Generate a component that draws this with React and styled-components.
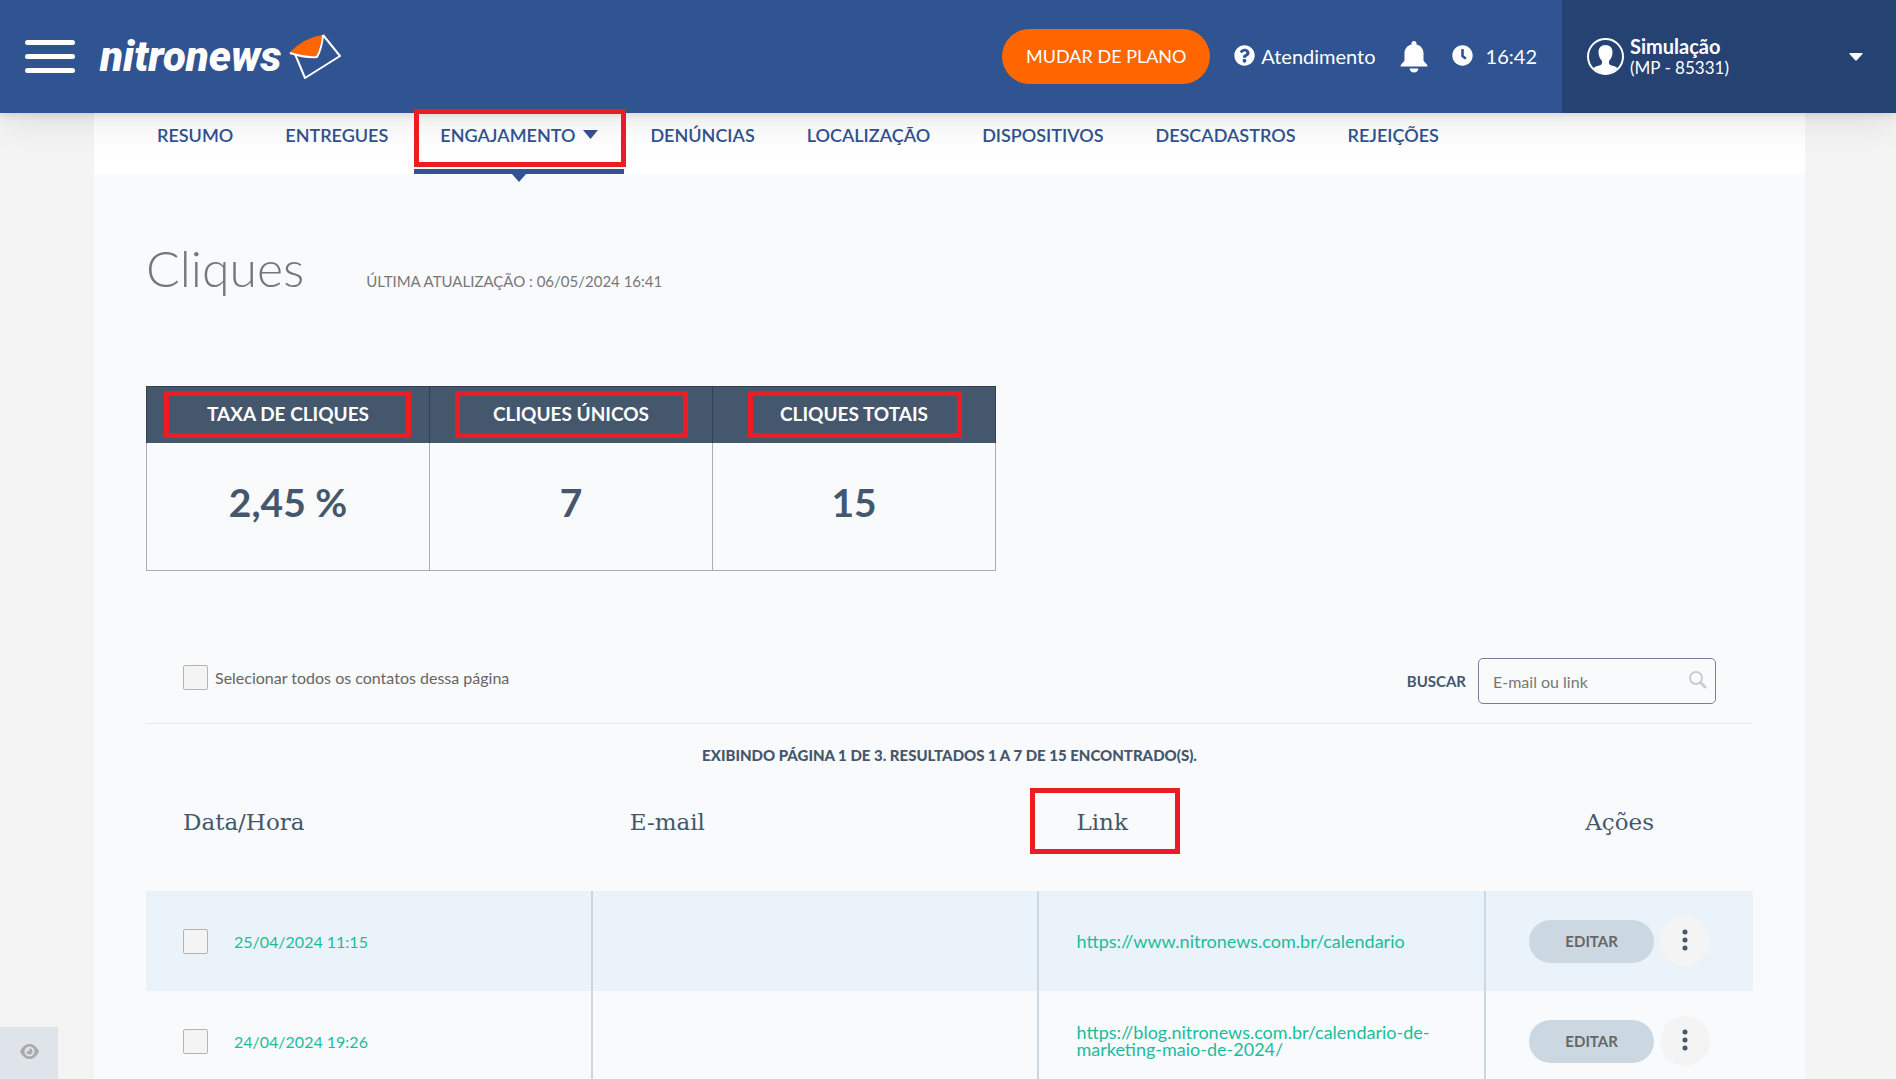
import React, { useState } from 'react'
import styled, { createGlobalStyle } from 'styled-components'
import { FaQuestionCircle, FaClock } from 'react-icons/fa'

const GlobalStyle = createGlobalStyle`
* {
box-sizing: border-box;
}
body {
margin: 0;
background-color: #f4f4f4;
font-family: Lato, sans-serif;
font-size: 16px;
color: #666;
}
button, input {
font-family: inherit;
}
`
const Page = styled.div`
height: 100vh;
overflow: hidden;
display: flex;
flex-direction: column;
`
const Header = styled.header`
position: relative;
z-index: 1;
flex: none;
display: flex;
align-items: stretch;
height: 113px;
background-color: #305391;
box-shadow: 0 0 10px rgba(0, 0, 0, 0.15), 0 6px 40px rgba(0, 0, 0, 0.1);
color: #fff;
`
const Brand = styled.div`
flex: 1;
display: flex;
align-items: center;
padding-left: 25px;
`
const MenuButton = styled.button`
display: flex;
flex-direction: column;
gap: 9px;
width: 50px;
padding: 0;
border: none;
background: none;
cursor: pointer;
`
const MenuBar = styled.span`
height: 5px;
border-radius: 3px;
background-color: #fff;
`
const Logo = styled.a`
display: flex;
align-items: center;
gap: 8px;
margin-left: 25px;
font-family: Roboto, sans-serif;
font-size: 42px;
line-height: 48px;
font-weight: 900;
font-style: italic;
color: #fff;
text-decoration: none;
`
const Tools = styled.div`
display: flex;
align-items: center;
gap: 24px;
padding-right: 25px;
font-size: 20px;
`
const PlanButton = styled.button`
width: 208px;
height: 55px;
padding: 0 0 2px;
border: none;
border-radius: 28px;
background-color: #ff6600;
color: #fff;
font-size: 18px;
cursor: pointer;
`
const Tool = styled.a`
display: flex;
align-items: center;
gap: ${props => props.$gap || 0}px;
padding-bottom: 2px;
color: #fff;
text-decoration: none;
`
const BellButton = styled.button`
display: flex;
padding: 0;
border: none;
background: none;
cursor: pointer;
`
const Account = styled.button`
display: flex;
align-items: center;
width: 334px;
padding: 0 33px 0 25px;
border: none;
background-color: #264273;
color: #fff;
text-align: left;
cursor: pointer;
`
const AccountText = styled.span`
flex: 1;
display: flex;
flex-direction: column;
margin-left: 6px;
font-size: 17px;
line-height: 22px;
`
const AccountName = styled.strong`
font-size: 20px;
`
const Main = styled.main`
flex: 1;
margin: 0 91px 0 94px;
background-color: #f9fafc;
`
const Tabs = styled.nav`
display: flex;
height: 61px;
padding-left: 37px;
background-color: #fff;
`
const Tab = styled.a`
position: relative;
display: flex;
gap: 8px;
padding: 10px 26px 0;
border-bottom: 5px solid ${props => props.$active ? '#305391' : 'transparent'};
font-size: 18px;
line-height: 24px;
font-weight: 600;
color: #305391;
text-decoration: none;
`
const TabCaret = styled.svg`
margin-top: 7px;
`
const TabArrow = styled.svg`
position: absolute;
top: 100%;
left: 50%;
margin: 5px 0 0 -7px;
`
// red frame drawn over the part it calls out
const Frame = styled.span`
position: absolute;
z-index: 2;
inset: ${props => props.$inset};
border: 5px solid #ed1c24;
pointer-events: none;
`
const Content = styled.div`
padding: 64px 52px 0;
`
const TitleRow = styled.div`
display: flex;
align-items: baseline;
gap: 62px;
`
const Title = styled.h1`
margin: 0;
font-size: 50px;
line-height: 60px;
font-weight: 300;
color: #777;
`
const Updated = styled.span`
font-size: 15px;
color: #777;
`
const Stats = styled.table`
width: 100%;
max-width: 850px;
margin-top: 88px;
border-collapse: collapse;
table-layout: fixed;
text-align: center;
color: #44576d;
`
const StatHead = styled.th`
position: relative;
height: 56px;
padding: 0 0 2px;
border: 1px solid #2f4055;
border-bottom: none;
background-color: #44576d;
font-size: 19px;
line-height: 24px;
color: #fff;
`
const StatValue = styled.td`
height: 128px;
padding: 0 0 8px;
border: 1px solid #acacac;
border-top: none;
font-size: 39px;
font-weight: bold;
`
const Toolbar = styled.div`
display: flex;
justify-content: space-between;
margin-top: 87px;
padding: 0 37px 19px;
border-bottom: 1px solid #e6e9ec;
`
const SelectAll = styled.label`
display: flex;
align-items: center;
gap: 7px;
height: 25px;
margin-top: 7px;
line-height: 28px;
`
const Checkbox = styled.input`
appearance: none;
flex: none;
width: 25px;
height: 25px;
margin: 0;
border: 1px solid #b4b4b4;
border-radius: 2px;
background-color: #f4f4f4;
`
const Search = styled.div`
position: relative;
display: flex;
align-items: center;
gap: 12px;
`
const SearchLabel = styled.label`
font-size: 15px;
font-weight: bold;
color: #44576d;
`
const SearchInput = styled.input`
width: 238px;
height: 46px;
padding: 0 40px 0 14px;
border: 1px solid #6d8299;
border-radius: 5px;
background: none;
font-size: 16px;
color: #44576d;
&::placeholder {
color: #777;
}
`
const SearchIcon = styled.svg`
position: absolute;
right: 9px;
top: 12px;
`
const Summary = styled.p`
margin: 21px 0 0;
font-size: 15px;
line-height: 20px;
font-weight: 900;
text-align: center;
color: #44576d;
`
const Clicks = styled.table`
width: 100%;
border-collapse: separate;
border-spacing: 0;
table-layout: fixed;
`
const ColumnHead = styled.th`
width: ${props => props.$width};
height: 126px;
padding: 0 0 12px ${props => props.$center ? 0 : 37}px;
font-family: "DejaVu Serif", serif;
font-size: 23px;
line-height: 30px;
font-weight: normal;
text-align: ${props => props.$center ? 'center' : 'left'};
color: #44576d;
`
const HeadText = styled.span`
position: relative;
display: inline-block;
`
const Row = styled.tr`
background-color: ${props => props.$shaded ? '#eaf3fa' : 'transparent'};
`
const Cell = styled.td`
height: 100px;
padding: 0 37px;
border-right: 2px solid #cbd8e2;
line-height: 17px;
&:last-child {
border-right: none;
}
`
const DateLabel = styled.label`
display: flex;
align-items: center;
gap: 26px;
color: #1abc9c;
`
const ClickLink = styled.a`
font-size: 18px;
color: #1abc9c;
text-decoration: none;
`
const Actions = styled.div`
display: flex;
align-items: center;
justify-content: center;
gap: 6px;
`
const EditButton = styled.button`
width: 125px;
height: 43px;
border: none;
border-radius: 22px;
background-color: #cbd8e2;
color: #666;
font-size: 15px;
font-weight: bold;
cursor: pointer;
`
const MoreButton = styled.button`
width: 50px;
height: 50px;
padding: 0;
border: none;
border-radius: 50%;
background-color: #f4f4f4;
cursor: pointer;
`
const WatchButton = styled.button`
position: fixed;
left: 0;
bottom: 0;
width: 58px;
height: 52px;
padding: 0;
border: none;
background-color: #dfe3ea;
cursor: pointer;
`

const tabs = ['Resumo', 'Entregues', 'Engajamento', 'Denúncias', 'Localização', 'Dispositivos', 'Descadastros', 'Rejeições']

const stats = [
  { name: 'TAXA DE CLIQUES', value: '2,45 %', frame: '4px 18px 5px 17px' },
  { name: 'CLIQUES ÚNICOS', value: '7', frame: '4px 24px 5px 25px' },
  { name: 'CLIQUES TOTAIS', value: '15', frame: '4px 33px 5px 35px' },
]

const clicks = [
  { date: '25/04/2024 11:15', email: '', link: 'https://www.nitronews.com.br/calendario' },
  { date: '24/04/2024 19:26', email: '', link: 'https://blog.nitronews.com.br/calendario-de-marketing-maio-de-2024/' },
]

const Envelope = () => (
  <svg width="52" height="46" viewBox="0 0 52 46">
    <path d="M6 20 L16 44 L51 22 L34 1" fill="none" stroke="#fff" strokeWidth="2" strokeLinejoin="round" />
    <path d="M0 19 Q14 4 33 1 Q32 12 28 22 Q16 23 0 19 Z" fill="#ff6600" />
    <path d="M1 19 Q16 24 28 23 Q33 14 34 1" fill="none" stroke="#fff" strokeWidth="2" strokeLinejoin="round" />
  </svg>
)

const Bell = () => (
  <svg width="28" height="32" viewBox="0 0 28 32" fill="#fff">
    <path d="M14 0 C15.500 0 16.500 1 16.500 2.500 V3.500 C21 4.500 23.500 8 23.500 12.500 V19 C23.500 21 27.500 22.500 27.500 25.500 H0.500 C0.500 22.500 4.500 21 4.500 19 V12.500 C4.500 8 7 4.500 11.500 3.500 V2.500 C11.500 1 12.500 0 14 0 Z" />
    <path d="M9.500 27.500 H18.500 C18 30 16.500 31.500 14 31.500 C11.500 31.500 10 30 9.500 27.500 Z" />
  </svg>
)

const Avatar = () => (
  <svg width="37" height="37" viewBox="0 0 37 37">
    <circle cx="18.500" cy="18.500" r="17.500" fill="none" stroke="#fff" strokeWidth="2" />
    <path d="M18.500 7 C23 7 25.500 10 25.500 14 C25.500 18 24 21 22 23 V25 C22 28 28 27.500 30.500 30 C27.500 33.500 23.500 35.500 18.500 35.500 C13.500 35.500 9.500 33.500 6.500 30 C9 27.500 15 28 15 25 V23 C13 21 11.500 18 11.500 14 C11.500 10 14 7 18.500 7 Z" fill="#fff" />
  </svg>
)

const App = () => {
  const [search, setSearch] = useState('')

  return (
    <Page>
      <GlobalStyle />
      <Header>
        <Brand>
          <MenuButton aria-label="Menu">
            <MenuBar />
            <MenuBar />
            <MenuBar />
          </MenuButton>
          <Logo href="#">
            nitronews
            <Envelope />
          </Logo>
        </Brand>
        <Tools>
          <PlanButton>MUDAR DE PLANO</PlanButton>
          <Tool href="#" $gap={6}>
            <FaQuestionCircle size={21} />
            Atendimento
          </Tool>
          <BellButton aria-label="Notificações">
            <Bell />
          </BellButton>
          <Tool as="span" $gap={13}>
            <FaClock size={21} />
            16:42
          </Tool>
        </Tools>
        <Account>
          <Avatar />
          <AccountText>
            <AccountName>Simulação</AccountName>
            (MP - 85331)
          </AccountText>
          <svg width="14" height="8" viewBox="0 0 14 8">
            <path d="M1 0 H13 Q14 0 13.500 1 L8 7 Q7 8 6 7 L0.500 1 Q0 0 1 0 Z" fill="#fff" />
          </svg>
        </Account>
      </Header>
      <Main>
        <Tabs>
          {tabs.map(tab => {
            const active = tab === 'Engajamento'
            return (
              <Tab key={tab} href="#" $active={active}>
                {tab.toUpperCase()}
                {active && (
                  <>
                    <TabCaret width="15" height="9" viewBox="0 0 15 9">
                      <path d="M0 0 H15 L7.500 9 Z" fill="#305391" />
                    </TabCaret>
                    <TabArrow width="14" height="8" viewBox="0 0 14 8">
                      <path d="M0 0 H14 L7 8 Z" fill="#305391" />
                    </TabArrow>
                    <Frame $inset="-4px -2px 2px 0" />
                  </>
                )}
              </Tab>
            )
          })}
        </Tabs>
        <Content>
          <TitleRow>
            <Title>Cliques</Title>
            <Updated>ÚLTIMA ATUALIZAÇÃO : 06/05/2024 16:41</Updated>
          </TitleRow>
          <Stats>
            <thead>
              <tr>
                {stats.map(stat => (
                  <StatHead key={stat.name}>
                    {stat.name}
                    <Frame $inset={stat.frame} />
                  </StatHead>
                ))}
              </tr>
            </thead>
            <tbody>
              <tr>
                {stats.map(stat => <StatValue key={stat.name}>{stat.value}</StatValue>)}
              </tr>
            </tbody>
          </Stats>
          <Toolbar>
            <SelectAll>
              <Checkbox type="checkbox" />
              Selecionar todos os contatos dessa página
            </SelectAll>
            <Search>
              <SearchLabel htmlFor="search">BUSCAR</SearchLabel>
              <SearchInput
                id="search"
                placeholder="E-mail ou link"
                value={search}
                onChange={e => setSearch(e.target.value)}
              />
              <SearchIcon width="19" height="19" viewBox="0 0 19 19" fill="none" stroke="#ccc" strokeLinecap="round">
                <circle cx="8" cy="8" r="6" strokeWidth="2" />
                <path d="M12.500 12.500 L17 17" strokeWidth="3" />
              </SearchIcon>
            </Search>
          </Toolbar>
          <Summary>EXIBINDO PÁGINA 1 DE 3. RESULTADOS 1 A 7 DE 15 ENCONTRADO(S).</Summary>
          <Clicks>
            <thead>
              <tr>
                <ColumnHead $width="27.8%">Data/Hora</ColumnHead>
                <ColumnHead $width="27.8%">E-mail</ColumnHead>
                <ColumnHead $width="27.8%">
                  <HeadText>
                    Link
                    <Frame $inset="-19px -52px -17px -46px" />
                  </HeadText>
                </ColumnHead>
                <ColumnHead $center>Ações</ColumnHead>
              </tr>
            </thead>
            <tbody>
              {clicks.map((click, index) => (
                <Row key={click.date} $shaded={index % 2 === 0}>
                  <Cell>
                    <DateLabel>
                      <Checkbox type="checkbox" />
                      {click.date}
                    </DateLabel>
                  </Cell>
                  <Cell>{click.email}</Cell>
                  <Cell>
                    <ClickLink href={click.link}>{click.link}</ClickLink>
                  </Cell>
                  <Cell>
                    <Actions>
                      <EditButton>EDITAR</EditButton>
                      <MoreButton aria-label="Mais ações">
                        <svg width="6" height="22" viewBox="0 0 6 22" fill="#44576d">
                          <circle cx="3" cy="3" r="2.500" />
                          <circle cx="3" cy="11" r="2.500" />
                          <circle cx="3" cy="19" r="2.500" />
                        </svg>
                      </MoreButton>
                    </Actions>
                  </Cell>
                </Row>
              ))}
            </tbody>
          </Clicks>
        </Content>
      </Main>
      <WatchButton aria-label="Acompanhar">
        <svg width="19" height="15" viewBox="0 0 19 15">
          <path d="M0 7.500 C2.500 2.500 5.500 0 9.500 0 C13.500 0 16.500 2.500 19 7.500 C16.500 12.500 13.500 15 9.500 15 C5.500 15 2.500 12.500 0 7.500 Z" fill="#aaa" />
          <circle cx="9.500" cy="7.500" r="5" fill="#dfe3ea" />
          <path d="M9.500 4.500 A3 3 0 1 1 6.500 7.500 Q9.500 8 9.500 4.500 Z" fill="#aaa" />
        </svg>
      </WatchButton>
    </Page>
  )
}

export default App
